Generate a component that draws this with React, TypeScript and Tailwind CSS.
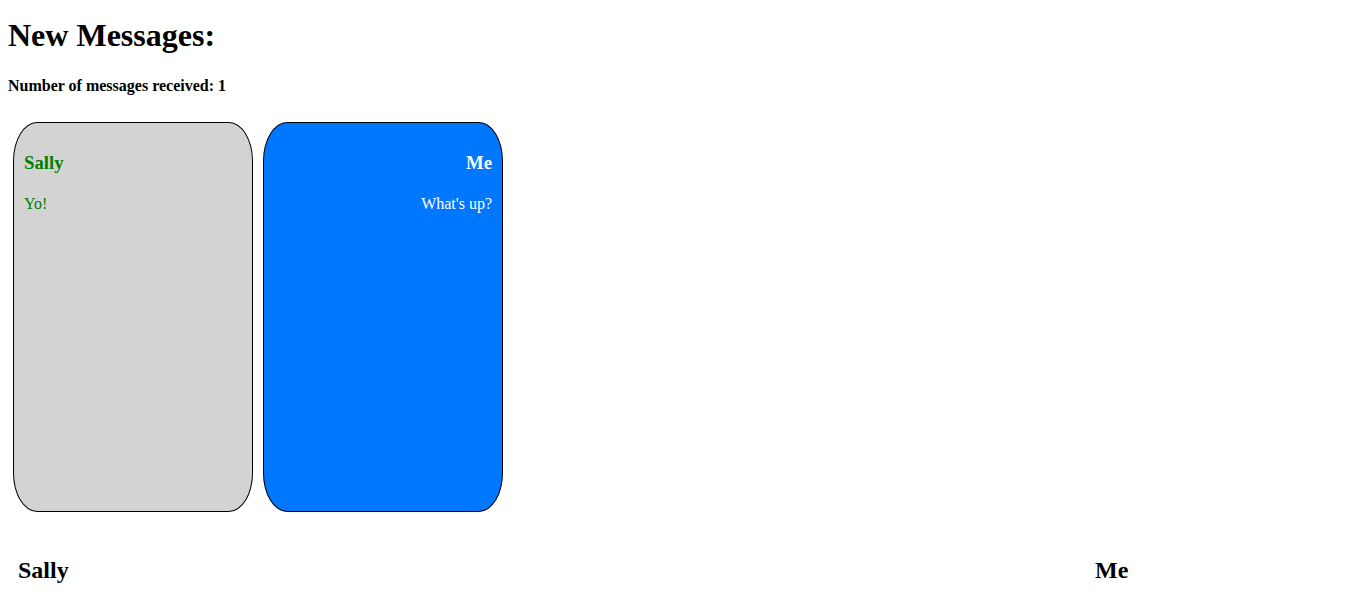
import React from 'react';

type Msg = { from: string; text: string; mine?: boolean };

const messages: Msg[] = [
    { from: 'Sally', text: 'Yo!' },
    { from: 'Me', text: "What's up?", mine: true },
];

function Bubble({ msg }: { msg: Msg }) {
    return (
        <div
            className={
                msg.mine
                    ? 'm-[5px] h-[390px] w-[240px] rounded-[10%] border border-black bg-[#0077ff] px-[10px] text-right text-white'
                    : 'm-[5px] h-[390px] w-[240px] rounded-[10%] border border-black bg-[#d3d3d3] px-[10px] text-[#008000]'
            }
        >
            <h3 className="mt-[26px] mb-[15px] text-[18.72px] font-bold">{msg.from}</h3>
            <p className="text-base">{msg.text}</p>
        </div>
    );
}

export default function App() {
    return (
        <div className="m-2 font-['Liberation_Serif',serif] text-black">
            <h1 className="mt-[16.5px] mb-[21px] text-[32px] font-bold leading-[1.15]">New Messages:</h1>
            <h4 className="mb-[19px] text-base font-bold">Number of messages received: 1</h4>
            <div className="flex">
                {messages.map((m) => (
                    <Bubble key={m.from} msg={m} />
                ))}
            </div>
            <div className="mt-[37px] flex px-[10px]">
                <h2 className="w-[1077px] text-2xl font-bold">Sally</h2>
                <h2 className="text-2xl font-bold">Me</h2>
            </div>
        </div>
    );
}
